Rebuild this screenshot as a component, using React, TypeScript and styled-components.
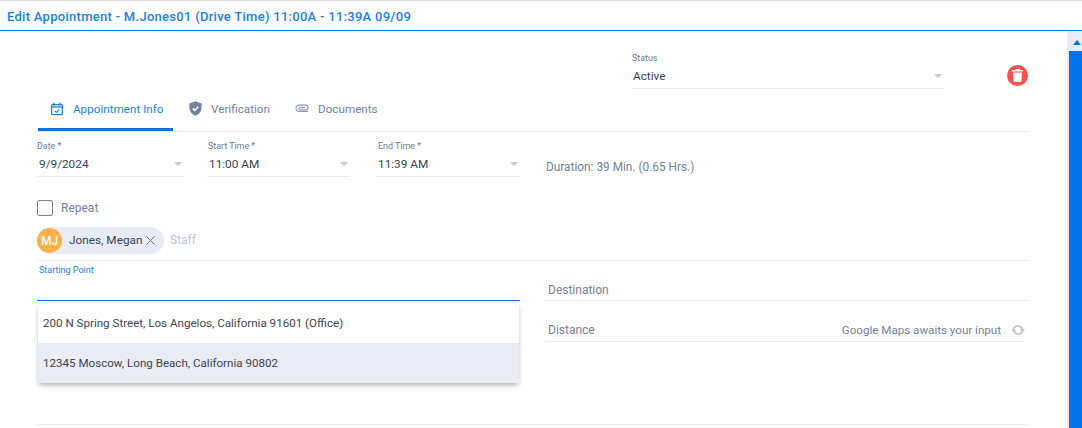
import React from "react";
import styled, { createGlobalStyle } from "styled-components";
import { X } from "lucide-react";

const GlobalStyle = createGlobalStyle`
  html, body {
    margin: 0;
    padding: 0;
    background: #fff;
    overflow: hidden;
  }
  body {
    font-family: Roboto, "Liberation Sans", sans-serif;
  }
`;

const Page = styled.div`
  width: 1082px;
  height: 428px;
  display: flex;
  flex-direction: column;
  overflow: hidden;
`;

const TitleBar = styled.div`
  height: 30px;
  box-sizing: border-box;
  border-top: 1px solid #dcdcdc;
  padding: 8px 0 0 7px;
  font-size: 13px;
  line-height: 15px;
  font-weight: 500;
  letter-spacing: 0.28px;
  color: #1a7fe8;
  flex: none;
`;

const Body = styled.div`
  flex: 1;
  display: flex;
  border-top: 1px solid #0073ec;
  min-height: 0;
`;

const Content = styled.div`
  width: 992px;
  margin-left: 37px;
  flex: none;
`;

const Scrollbar = styled.div`
  margin-left: 38px;
  width: 15px;
  background: #e9ecf4;
  display: flex;
  flex-direction: column;
  flex: none;
`;

const ScrollArrow = styled.div`
  height: 20px;
  display: flex;
  justify-content: center;
  padding-top: 9px;
  box-sizing: border-box;
  &::before {
    content: "";
    border-left: 4px solid transparent;
    border-right: 4px solid transparent;
    border-bottom: 5px solid #0073ec;
    height: 0;
    margin-left: 5px;
  }
`;

const ScrollThumb = styled.div`
  flex: 1;
  margin-left: 2px;
  background: #0073ec;
`;

const StatusRow = styled.div`
  display: flex;
  height: 58px;
  padding: 22px 0 0 595px;
  box-sizing: border-box;
  align-items: flex-start;
`;

const DeleteButton = styled.div`
  width: 21px;
  height: 21px;
  border-radius: 50%;
  background: #ff4f4f;
  margin: 12px 0 0 63px;
  display: flex;
  align-items: center;
  justify-content: center;
  flex: none;
`;

const Field = styled.div<{ $width: number; $gap?: number }>`
  width: ${(p) => p.$width}px;
  margin-left: ${(p) => p.$gap ?? 0}px;
  flex: none;
`;

const FieldLabel = styled.div<{ $indent?: number }>`
  font-size: 9px;
  line-height: 11px;
  margin-left: ${(p) => p.$indent ?? 0}px;
  color: #6f7b91;
  letter-spacing: -0.05px;
`;

const SelectBox = styled.div<{ $indent?: number }>`
  height: 25px;
  box-sizing: border-box;
  border-bottom: 1px solid #e8eaf2;
  display: flex;
  align-items: center;
  justify-content: space-between;
  padding: 0 2px 0 ${(p) => p.$indent ?? 2}px;
  font-size: 11.8px;
  color: #3a4356;
`;

const Caret = styled.span`
  width: 0;
  height: 0;
  border-left: 4px solid transparent;
  border-right: 4px solid transparent;
  border-top: 4px solid #c4c8d2;
`;

const Tabs = styled.div`
  display: flex;
  height: 43px;
  box-sizing: border-box;
  border-bottom: 1px solid #e8eaf2;
`;

const Tab = styled.div<{ $active?: boolean; $width: number }>`
  width: ${(p) => p.$width}px;
  height: 42px;
  box-sizing: border-box;
  display: flex;
  align-items: center;
  padding-left: ${(p) => (p.$active ? 12 : 16)}px;
  gap: 9px;
  font-size: 11.7px;
  color: ${(p) => (p.$active ? "#1a7fe8" : "#76819a")};
  border-bottom: 3px solid ${(p) => (p.$active ? "#0073ec" : "transparent")};
  margin-left: ${(p) => (p.$active ? "1px" : "0")};
`;

const TimeRow = styled.div`
  display: flex;
  margin-top: 9px;
`;

const Duration = styled.div`
  margin: 19px 0 0 26px;
  font-size: 11.85px;
  line-height: 14px;
  color: #76819a;
`;

const RepeatRow = styled.label`
  display: flex;
  align-items: center;
  gap: 8px;
  margin-top: 23px;
  height: 16px;
  font-size: 12px;
  color: #76819a;
`;

const CheckBox = styled.span`
  width: 16px;
  height: 16px;
  box-sizing: border-box;
  border: 1px solid #76819a;
  border-radius: 2px;
`;

const StaffRow = styled.div`
  display: flex;
  align-items: center;
  height: 34px;
  margin-top: 11px;
  padding-bottom: 6px;
  box-sizing: border-box;
  border-bottom: 1px solid #e8eaf2;
  gap: 6px;
`;

const Chip = styled.div`
  display: flex;
  align-items: center;
  width: 127px;
  height: 27px;
  border-radius: 14px;
  background: #e9ecf4;
  font-size: 11.8px;
  color: #3a4356;
`;

const Avatar = styled.div`
  width: 25px;
  height: 25px;
  margin-right: 7px;
  border-radius: 50%;
  background: #ffb14a;
  color: #fff;
  font-size: 12px;
  font-weight: 500;
  display: flex;
  align-items: center;
  justify-content: center;
  flex: none;
`;

const ChipName = styled.span`
  margin: -1px 1px 0 0;
`;

const StaffHint = styled.span`
  font-size: 12px;
  margin-top: -1px;
  color: #c1c6d2;
`;

const RouteGrid = styled.div`
  display: grid;
  grid-template-columns: 483px 484px;
  column-gap: 25px;
  height: 164px;
  box-sizing: border-box;
  border-bottom: 1px solid #e8eaf2;
`;

const StartField = styled.div`
  position: relative;
  padding-top: 4px;
`;

const StartLabel = styled.div`
  font-size: 9px;
  line-height: 11px;
  margin-left: 2px;
  color: #1a7fe8;
`;

const StartInput = styled.div`
  height: 24px;
  border-bottom: 1px solid #0073ec;
`;

const Suggestions = styled.div`
  position: absolute;
  top: 42px;
  left: 1px;
  width: 481px;
  background: #fff;
  box-shadow: 0 3px 5px -1px rgba(40, 45, 60, 0.38);
`;

const Suggestion = styled.div<{ $hover?: boolean }>`
  height: 40px;
  display: flex;
  align-items: center;
  padding-left: 5px;
  font-size: 11.6px;
  color: #3f4450;
  background: ${(p) => (p.$hover ? "#e9ecf4" : "#fff")};
`;

const RightColumn = styled.div`
  display: flex;
  flex-direction: column;
`;

const PlainLine = styled.div<{ $height: number; $inset?: number }>`
  height: ${(p) => p.$height}px;
  box-sizing: border-box;
  border-bottom: 1px solid #e8eaf2;
  margin-right: ${(p) => p.$inset ?? 0}px;
  display: flex;
  align-items: flex-end;
  justify-content: space-between;
  padding: 0 0 4px 3px;
  font-size: 12px;
  line-height: 14px;
  color: #76819a;
`;

const DestinationLine = styled(PlainLine)`
  padding-bottom: 3px;
`;

const MapsStatus = styled.span`
  display: flex;
  align-items: center;
  gap: 9px;
  margin-right: -2px;
  font-size: 11.6px;
`;

const TrashIcon = () => (
  <svg width="11" height="13" viewBox="0 0 11 13" aria-hidden="true">
    <path
      fill="#fff"
      d="M3.7 0h3.6l.5 1H11v1.6H0V1h3.2zM1 3.4h9l-.6 8.6a1 1 0 0 1-1 1H2.600a1 1 0 0 1-1-1z"
    />
  </svg>
);

const CalendarIcon = () => (
  <svg width="14" height="14" viewBox="0 0 14 14" fill="none" aria-hidden="true">
    <rect x="1.6" y="2.6" width="10.8" height="10" rx="1" stroke="#1a7fe8" strokeWidth="1.3" />
    <path d="M1.6 5h10.8" stroke="#1a7fe8" strokeWidth="1.3" />
    <path d="M4 .8v2.6M10 .8v2.6" stroke="#1a7fe8" strokeWidth="1.4" />
    <path d="M4.800 8.800l1.600 1.600 2.900-3" stroke="#1a7fe8" strokeWidth="1.1" />
  </svg>
);

const ShieldIcon = () => (
  <svg width="13" height="15" viewBox="0 0 13 15" aria-hidden="true">
    <path
      fill="#76819a"
      d="M6.500.3 12.600 2.600v4.200c0 3.600-2.500 6.600-6.100 7.900C2.900 13.400.4 10.400.4 6.800V2.600z"
    />
    <path d="M3.800 7.400l2 2 3.500-3.700" stroke="#fff" strokeWidth="1.5" fill="none" />
  </svg>
);

const ClipIcon = () => (
  <svg width="14" height="9" viewBox="0 0 14 9" fill="none" aria-hidden="true">
    <path
      d="M13 7.500H4.200a3.200 3.200 0 0 1 0-6.400h6.300a2.400 2.400 0 0 1 0 4.800H5a1.200 1.200 0 0 1 0-2.400h5.500"
      stroke="#8c96aa"
      strokeWidth="1.1"
    />
  </svg>
);

const RefreshIcon = () => (
  <svg width="16" height="10" viewBox="0 0 16 10" fill="#b9bfcb" aria-hidden="true">
    <path d="M3.200 4.200A4.800 4.800 0 0 1 12 3.600" fill="none" stroke="#b9bfcb" strokeWidth="1.700" />
    <path d="M9.600 3.800h5.400l-2.700 3z" />
    <path d="M12.800 5.800A4.800 4.800 0 0 1 4 6.400" fill="none" stroke="#b9bfcb" strokeWidth="1.700" />
    <path d="M1 6.200h5.400l-2.700-3z" />
  </svg>
);

export default function App() {
  return (
    <Page>
      <GlobalStyle />
      <TitleBar>Edit Appointment - M.Jones01 (Drive Time) 11:00A - 11:39A 09/09</TitleBar>
      <Body>
        <Content>
          <StatusRow>
            <Field $width={312}>
              <FieldLabel>Status</FieldLabel>
              <SelectBox $indent={1}>
                Active
                <Caret />
              </SelectBox>
            </Field>
            <DeleteButton>
              <TrashIcon />
            </DeleteButton>
          </StatusRow>

          <Tabs>
            <Tab $active $width={135}>
              <CalendarIcon />
              Appointment Info
            </Tab>
            <Tab $width={106}>
              <ShieldIcon />
              Verification
            </Tab>
            <Tab $width={110}>
              <ClipIcon />
              Documents
            </Tab>
          </Tabs>

          <TimeRow>
            <Field $width={147}>
              <FieldLabel>Date *</FieldLabel>
              <SelectBox>
                9/9/2024
                <Caret />
              </SelectBox>
            </Field>
            <Field $width={143} $gap={23}>
              <FieldLabel $indent={1}>Start Time *</FieldLabel>
              <SelectBox>
                11:00 AM
                <Caret />
              </SelectBox>
            </Field>
            <Field $width={143} $gap={27}>
              <FieldLabel $indent={1}>End Time *</FieldLabel>
              <SelectBox $indent={1}>
                11:39 AM
                <Caret />
              </SelectBox>
            </Field>
            <Duration>Duration: 39 Min. (0.65 Hrs.)</Duration>
          </TimeRow>

          <RepeatRow>
            <CheckBox />
            Repeat
          </RepeatRow>

          <StaffRow>
            <Chip>
              <Avatar>MJ</Avatar>
              <ChipName>Jones, Megan</ChipName>
              <X size={15} color="#6a7286" strokeWidth={1.6} />
            </Chip>
            <StaffHint>Staff</StaffHint>
          </StaffRow>

          <RouteGrid>
            <StartField>
              <StartLabel>Starting Point</StartLabel>
              <StartInput />
              <Suggestions>
                <Suggestion>200 N Spring Street, Los Angelos, California 91601 (Office)</Suggestion>
                <Suggestion $hover>12345 Moscow, Long Beach, California 90802</Suggestion>
              </Suggestions>
            </StartField>
            <RightColumn>
              <DestinationLine $height={40}>Destination</DestinationLine>
              <PlainLine $height={41} $inset={5}>
                Distance
                <MapsStatus>
                  Google Maps awaits your input
                  <RefreshIcon />
                </MapsStatus>
              </PlainLine>
            </RightColumn>
          </RouteGrid>
        </Content>
        <Scrollbar>
          <ScrollArrow />
          <ScrollThumb />
        </Scrollbar>
      </Body>
    </Page>
  );
}
